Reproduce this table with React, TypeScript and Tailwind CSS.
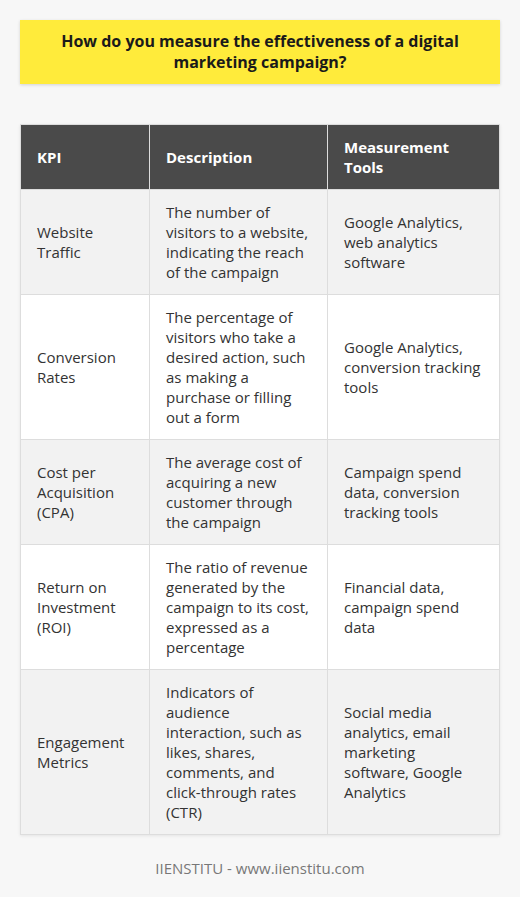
import React from "react";

const rows = [
  ["Website Traffic", "The number of visitors to a website, indicating the reach of the campaign", "Google Analytics, web analytics software"],
  ["Conversion Rates", "The percentage of visitors who take a desired action, such as making a purchase or filling out a form", "Google Analytics, conversion tracking tools"],
  ["Cost per Acquisition (CPA)", "The average cost of acquiring a new customer through the campaign", "Campaign spend data, conversion tracking tools"],
  ["Return on Investment (ROI)", "The ratio of revenue generated by the campaign to its cost, expressed as a percentage", "Financial data, campaign spend data"],
  ["Engagement Metrics", "Indicators of audience interaction, such as likes, shares, comments, and click-through rates (CTR)", "Social media analytics, email marketing software, Google Analytics"],
];

export default function App() {
  return (
    <div className="min-h-[897px] bg-[#f7f7f7] px-5 pt-5 pb-6 text-[#333333]" style={{ fontFamily: '"Open Sans", sans-serif' }}>
      <div className="bg-[#ffeb3b] px-6 py-[11px] text-center text-[16px] font-bold leading-[21px] text-[#1a1a1a] shadow-[0_1px_3px_rgba(0,0,0,0.15)]">
        How do you measure the effectiveness of a digital marketing campaign?
      </div>
      <table className="mt-[40px] w-full table-fixed border-collapse text-[15px] leading-[20px] shadow-[0_1px_3px_rgba(0,0,0,0.08)]">
        <colgroup>
          <col className="w-[129px]" />
          <col className="w-[178px]" />
          <col />
        </colgroup>
        <thead>
          <tr className="bg-[#4a4a4a] text-white">
            <th className="border border-[#dddddd] px-4 py-3 text-left font-bold">KPI</th>
            <th className="border border-[#dddddd] px-4 py-3 text-left font-bold">Description</th>
            <th className="border border-[#dddddd] px-4 py-3 text-left font-bold">Measurement Tools</th>
          </tr>
        </thead>
        <tbody>
          {rows.map((r, i) => (
            <tr key={i} className={i % 2 === 0 ? "bg-[#f2f2f2]" : "bg-white"}>
              {r.map((c, j) => (
                <td key={j} className="border border-[#dddddd] px-4 py-3 align-middle">
                  {c}
                </td>
              ))}
            </tr>
          ))}
        </tbody>
      </table>
      <div className="mt-[23px] text-center text-[15px] leading-[20px] text-[#777777]">IIENSTITU - www.iienstitu.com</div>
    </div>
  );
}
